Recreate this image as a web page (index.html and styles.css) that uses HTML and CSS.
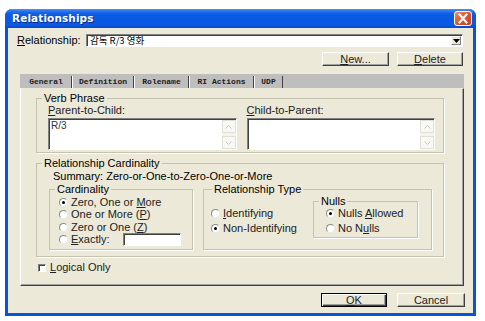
FILE: index.html
```html
<!DOCTYPE html>
<html>
<head>
<meta charset="utf-8">
<title>Relationships</title>
<link rel="stylesheet" href="styles.css">
</head>
<body>
<div class="window">
  <div class="titlebar">
    <span class="title">Relationships</span>
    <span class="close">
      <svg width="18" height="15" viewBox="0 0 18 15">
        <defs>
          <linearGradient id="cg" x1="0" y1="0" x2="1" y2="1">
            <stop offset="0" stop-color="#F0906A"/>
            <stop offset="0.5" stop-color="#E0552E"/>
            <stop offset="1" stop-color="#C83A1C"/>
          </linearGradient>
        </defs>
        <rect x="0.5" y="0.5" width="17" height="14" rx="2.5" fill="url(#cg)" stroke="#fff"/>
        <path d="M5.5 3.5 L12.5 11.5 M12.5 3.5 L5.5 11.5" stroke="#fff" stroke-width="2" stroke-linecap="square"/>
      </svg>
    </span>
  </div>
  <div class="client">
    <div class="rel-row">
      <span class="lbl"><u>R</u>elationship:</span>
      <div class="combo">
        <span class="combo-text">감독 R/3 영화</span>
        <span class="combo-btn">
          <svg width="7" height="4" viewBox="0 0 7 4"><path d="M0 0 H7 L3.5 4 Z" fill="#000"/></svg>
        </span>
      </div>
    </div>
    <div class="btn-row">
      <span class="btn btn-new"><span><u>N</u>ew...</span></span>
      <span class="btn btn-del"><span><u>D</u>elete</span></span>
    </div>
    <div class="tabs">
      <span class="tab tab-general">General</span>
      <span class="tab tab-def">Definition</span>
      <span class="tab tab-role">Rolename</span>
      <span class="tab tab-ri">RI Actions</span>
      <span class="tab tab-udp">UDP</span>
    </div>
    <div class="panel">
      <fieldset class="group verb">
        <legend>Verb Phrase</legend>
        <div class="vp-cols">
          <div class="vp-col">
            <div class="vp-lbl"><u>P</u>arent-to-Child:</div>
            <div class="memo">
              <div class="memo-text">R/3</div>
              <div class="vscroll">
                <span class="sb-btn"><svg width="7" height="4" viewBox="0 0 7 4"><path d="M0.5 3.5 L3.5 0.5 L6.5 3.5" fill="none" stroke="#C8C8C8"/></svg></span>
                <span class="sb-track"></span>
                <span class="sb-btn"><svg width="7" height="4" viewBox="0 0 7 4"><path d="M0.5 0.5 L3.5 3.5 L6.5 0.5" fill="none" stroke="#C8C8C8"/></svg></span>
              </div>
            </div>
          </div>
          <div class="vp-col">
            <div class="vp-lbl"><u>C</u>hild-to-Parent:</div>
            <div class="memo">
              <div class="memo-text"></div>
              <div class="vscroll">
                <span class="sb-btn"><svg width="7" height="4" viewBox="0 0 7 4"><path d="M0.5 3.5 L3.5 0.5 L6.5 3.5" fill="none" stroke="#C8C8C8"/></svg></span>
                <span class="sb-track"></span>
                <span class="sb-btn"><svg width="7" height="4" viewBox="0 0 7 4"><path d="M0.5 0.5 L3.5 3.5 L6.5 0.5" fill="none" stroke="#C8C8C8"/></svg></span>
              </div>
            </div>
          </div>
        </div>
      </fieldset>

      <fieldset class="group card">
        <legend>Relationship Cardinality</legend>
        <div class="summary">Summary: Zero-or-One-to-Zero-One-or-More</div>
        <div class="card-row">
          <fieldset class="group cardinality">
            <legend>Cardinality</legend>
            <div class="opt r1"><span class="radio on"></span><span>Zero, One or <u>M</u>ore</span></div>
            <div class="opt r2"><span class="radio"></span><span>One or More (<u>P</u>)</span></div>
            <div class="opt r3"><span class="radio"></span><span>Zero or One (<u>Z</u>)</span></div>
            <div class="opt r4"><span class="radio"></span><span><u>E</u>xactly:</span><span class="edit"></span></div>
          </fieldset>
          <fieldset class="group reltype">
            <legend>Relationship Type</legend>
            <div class="rt-inner">
              <div class="rt-col">
                <div class="opt rt1"><span class="radio"></span><span><u>I</u>dentifying</span></div>
                <div class="opt rt2"><span class="radio on"></span><span>Non-Identifying</span></div>
              </div>
              <fieldset class="group nulls">
                <legend>Nulls</legend>
                <div class="opt rt1"><span class="radio on"></span><span>Nulls <u>A</u>llowed</span></div>
                <div class="opt rt2"><span class="radio"></span><span>No N<u>u</u>lls</span></div>
              </fieldset>
            </div>
          </fieldset>
        </div>
      </fieldset>

      <div class="check"><span class="cbox"></span><span><u>L</u>ogical Only</span></div>
    </div>
    <div class="footer">
      <span class="btn btn-ok"><span><u>O</u>K</span></span>
      <span class="btn btn-cancel"><span>Cancel</span></span>
    </div>
  </div>
</div>
</body>
</html>
```

FILE: styles.css
```css
html, body {
  margin: 0;
  padding: 0;
  background: #ffffff;
}

body {
  font-family: "Liberation Sans", Arial, "Noto Sans CJK KR", sans-serif;
  font-size: 11px;
  line-height: 13px;
  color: #000;
}

u { text-decoration: underline; text-underline-offset: 1px; }

.window {
  margin: 9px 0 0 5px;
  width: 471px;
  height: 307px;
  background: #0853DC;
  border-radius: 7px 7px 0 0;
  display: flex;
  flex-direction: column;
  box-sizing: border-box;
}

.titlebar {
  height: 19px;
  flex: 0 0 19px;
  border-radius: 7px 7px 0 0;
  background: linear-gradient(#4A96F4 0px, #2A74EC 2px, #0C5CE6 5px, #0A58E2 12px, #0B5AE4 16px, #0649CE 19px);
  display: flex;
  align-items: center;
  padding: 0 4px 0 7px;
}

.title {
  font-family: "DejaVu Sans", sans-serif;
  font-weight: bold;
  font-size: 10.5px;
  color: #fff;
  text-shadow: 1px 1px 0 #0A2A8C;
  flex: 1;
  letter-spacing: 0.1px;
}

.close {
  display: flex;
  width: 18px;
  height: 15px;
}

.client {
  flex: 1;
  margin: 0 3px 3px 3px;
  background: #ECE9D8;
  display: flex;
  flex-direction: column;
}

/* Relationship row */
.rel-row {
  display: flex;
  align-items: center;
  margin-top: 6px;
  padding: 0 10px 0 9px;
  height: 13px;
}

.lbl {
  flex: 0 0 69px;
}

.combo {
  flex: 1;
  height: 13px;
  box-sizing: border-box;
  background: #fff;
  border: 1px solid;
  border-color: #808080 #fff #fff #808080;
  box-shadow: inset 1px 1px 0 #404040;
  display: flex;
  align-items: center;
}

.combo-text {
  flex: 1;
  font-family: "Noto Sans CJK KR", "Liberation Sans", sans-serif;
  font-size: 9.5px;
  line-height: 11px;
  padding-left: 3px;
}

.combo-btn {
  width: 10px;
  height: 9px;
  margin-right: 1px;
  box-sizing: border-box;
  background: #ECE9D8;
  border: 1px solid;
  border-color: #fff #808080 #808080 #fff;
  display: flex;
  align-items: center;
  justify-content: center;
}

/* Buttons */
.btn-row {
  display: flex;
  justify-content: flex-end;
  gap: 8px;
  margin-top: 5px;
  padding-right: 10px;
}

.btn {
  display: flex;
  align-items: center;
  justify-content: center;
  height: 14px;
  box-sizing: border-box;
  background: #ECE9D8;
  border: 1px solid;
  border-color: #fff #404040 #404040 #fff;
  box-shadow: inset -1px -1px 0 #A0A0A0;
  font-size: 11px;
  color: #222;
}

.btn-new { width: 67px; }
.btn-del { width: 66px; }
.btn-ok {
  width: 66px;
  border: 1px solid #000;
  box-shadow: inset 1px 1px 0 #fff, inset -1px -1px 0 #404040, inset -2px -2px 0 #A0A0A0;
}
.btn-cancel { width: 68px; }

/* Tabs */
.tabs {
  display: flex;
  margin: 8px 9px 0 12px;
  height: 14px;
  background: #BEBEBE;
  align-items: flex-end;
}

.tab {
  font-family: "Liberation Mono", "DejaVu Sans Mono", monospace;
  font-weight: bold;
  font-size: 8px;
  line-height: 12px;
  height: 12px;
  color: #202020;
  text-align: center;
  border-left: 1px solid #fff;
  border-right: 1px solid #404040;
  box-sizing: border-box;
}
.tab-general { width: 52px; border-left-color: #BEBEBE; }
.tab-def { width: 62px; }
.tab-role { width: 55px; }
.tab-ri { width: 65px; }
.tab-udp { width: 29px; }

/* Panel */
.panel {
  margin: 0 9px 0 12px;
  height: 198px;
  box-sizing: border-box;
  border: 1px solid;
  border-color: #ECE9D8 #404040 #404040 #fff;
  box-shadow: inset -1px -1px 0 #A0A0A0;
  padding: 3px 19px 0 15px;
}

.group {
  margin: 0;
  border: 1px solid #C5C2AF;
  box-shadow: 1px 1px 0 #fff;
  min-width: 0;
}

.group > legend {
  padding: 0 2px;
  line-height: 12px;
  font-size: 11px;
}

.verb {
  padding: 0 8px 2px 11px;
}
.verb > legend { margin-left: -6px; }

.vp-cols {
  display: flex;
  gap: 10px;
}

.vp-col {
  flex: 1;
}

.vp-lbl {
  height: 13px;
  color: #222;
}

.memo {
  margin-top: 1px;
  height: 32px;
  box-sizing: border-box;
  background: #fff;
  border: 1px solid;
  border-color: #808080 #fff #fff #808080;
  box-shadow: inset 1px 1px 0 #404040;
  display: flex;
}

.memo-text {
  flex: 1;
  padding: 1px 0 0 2px;
  font-size: 10px;
  line-height: 11px;
  color: #333;
}

.vscroll {
  width: 14px;
  margin: 1px 0 0 0;
  display: flex;
  flex-direction: column;
  background: #F4F3EE;
}

.sb-btn {
  height: 13px;
  box-sizing: border-box;
  border: 1px solid #E2E0D6;
  background: #F8F8F4;
  display: flex;
  align-items: center;
  justify-content: center;
}

.sb-track { flex: 1; }

/* Cardinality */
.card {
  margin-top: 4px;
  padding: 1px 11px 6px 12px;
}
.card > legend { margin-left: -7px; }

.summary {
  padding-left: 4px;
  height: 13px;
}

.card-row {
  display: flex;
  gap: 10px;
}

.cardinality {
  width: 144px;
  box-sizing: border-box;
  padding: 1px 0 3px 9px;
}
.cardinality > legend { margin-left: -4px; }

.opt {
  display: flex;
  align-items: center;
  white-space: nowrap;
  color: #222;
}

.cardinality .r1 { height: 12px; }
.cardinality .r2 { height: 13px; }
.cardinality .r3 { height: 12px; }
.cardinality .r4 { height: 13px; }

.radio {
  width: 9px;
  height: 9px;
  flex: 0 0 9px;
  box-sizing: border-box;
  border-radius: 50%;
  border: 1px solid;
  border-color: #8A8A8A #E8E8E8 #E8E8E8 #8A8A8A;
  background: #fff;
  margin-right: 3px;
  display: flex;
  align-items: center;
  justify-content: center;
}

.radio.on::after {
  content: "";
  width: 3px;
  height: 3px;
  border-radius: 50%;
  background: #000;
}

.edit {
  width: 58px;
  height: 13px;
  margin-left: 13px;
  box-sizing: border-box;
  background: #fff;
  border: 1px solid;
  border-color: #808080 #fff #fff #808080;
  box-shadow: inset 1px 1px 0 #404040;
}

.reltype {
  flex: 1;
  padding: 0 13px 5px 7px;
}
.reltype > legend { margin-left: 1px; }

.rt-inner {
  display: flex;
  justify-content: space-between;
  align-items: flex-start;
}

.rt-col {
  margin-top: 12px;
}

.rt1 { height: 12px; margin-bottom: 3px; }
.rt2 { height: 12px; }

.nulls {
  width: 105px;
  box-sizing: border-box;
  padding: 0 0 3px 12px;
}
.nulls > legend { margin-left: -7px; }

/* Checkbox */
.check {
  display: flex;
  align-items: center;
  height: 13px;
  margin: 4px 0 0 2px;
  color: #222;
}

.cbox {
  width: 8px;
  height: 8px;
  box-sizing: border-box;
  background: #fff;
  border: 1px solid;
  border-color: #808080 #fff #fff #808080;
  box-shadow: inset 1px 1px 0 #404040;
  margin-right: 4px;
}

/* Footer */
.footer {
  display: flex;
  justify-content: flex-end;
  gap: 10px;
  margin-top: 7px;
  padding-right: 8px;
}
```
